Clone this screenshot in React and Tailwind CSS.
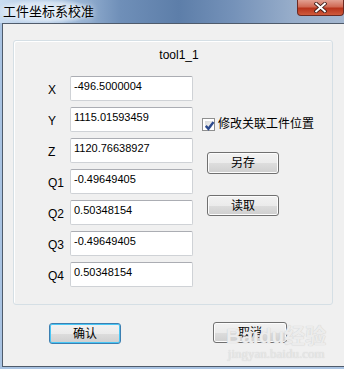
import React from "react";

const rows = [
  { label: "X", value: "-496.5000004" },
  { label: "Y", value: "1115.01593459" },
  { label: "Z", value: "1120.76638927" },
  { label: "Q1", value: "-0.49649405" },
  { label: "Q2", value: "0.50348154" },
  { label: "Q3", value: "-0.49649405" },
  { label: "Q4", value: "0.50348154" },
];

function WinButton({ children, focused, className = "" }) {
  return (
    <div
      className={`flex items-center justify-center rounded-[3px] border text-[12px] text-black ${
        focused
          ? "border-[#3c7fb1] shadow-[inset_0_0_0_1px_#48c6f5]"
          : "border-[#707070] shadow-[inset_0_0_0_1px_#fcfcfc]"
      } bg-[linear-gradient(#f2f2f2_0%,#ebebeb_50%,#dddddd_51%,#cfcfcf_100%)] ${className}`}
    >
      {children}
    </div>
  );
}

function CheckBox() {
  return (
    <div className="w-[13px] h-[13px] border border-[#8e8f8f] bg-white p-[2px]">
      <div className="w-full h-full bg-[linear-gradient(135deg,#d9dadb,#f6f6f6)] relative">
        <svg viewBox="0 0 9 9" className="absolute -left-[1px] -top-[1px] w-[11px] h-[11px]">
          <path d="M1.5 4.8 L3.6 7.2 L7.8 1.6" fill="none" stroke="#2c4a8e" strokeWidth="1.9" />
        </svg>
      </div>
    </div>
  );
}

export default function App() {
  return (
    <div
      className="w-[344px] h-[369px] overflow-hidden bg-[#a9c3e2] relative"
      style={{ fontFamily: '"Liberation Sans", "Noto Sans CJK SC", sans-serif' }}
    >
      {/* Title bar */}
      <div className="h-[23px] relative bg-[linear-gradient(90deg,#c9dcf1_0%,#a9c2df_18%,#6f8fb8_35%,#5d7ea9_52%,#7592b9_68%,#97adca_85%,#a4b7d0_100%)]">
        <div className="absolute left-0 top-0 w-[90px] h-[23px] bg-[radial-gradient(ellipse_at_center,#eef5fdcc_0%,#e4eef9aa_55%,transparent_80%)]" />
        <span className="absolute left-[3px] top-[3px] text-[13px] leading-[17px] text-black [text-shadow:0_0_6px_#ffffff]">
          工件坐标系校准
        </span>
        <div className="absolute right-0 top-0 w-[47px] h-[16px] rounded-b-[4px] border border-t-0 border-[#6b2a23] bg-[linear-gradient(#e2a092_0%,#d06a55_45%,#b8341c_55%,#cf5a3c_100%)] flex items-center justify-center">
          <svg viewBox="0 0 12 10" className="w-[13px] h-[11px]">
            <path d="M2 1.5 L10 8.5 M10 1.5 L2 8.5" stroke="#3b1a16" strokeWidth="3.4" strokeLinecap="square" />
            <path d="M2 1.5 L10 8.5 M10 1.5 L2 8.5" stroke="#ffffff" strokeWidth="1.8" strokeLinecap="square" />
          </svg>
        </div>
      </div>

      {/* Client area */}
      <div className="ml-[2px] h-[344px] border-l border-t border-b border-[#4f5b6b] bg-[#f0f0f0] flex flex-col">
        {/* Group box */}
        <div className="ml-[10px] mt-[16px] w-[320px] h-[265px] border border-[#d5dfe5] rounded-[3px] shadow-[inset_1px_1px_0_#ffffff]">
          <div className="text-center text-[12px] leading-[14px] text-black mt-[7px] pl-[12px]">tool1_1</div>
          <div className="flex mt-[14px]">
            <div className="flex flex-col gap-[6px] pl-[34px]">
              {rows.map((r) => (
                <div key={r.label} className="flex">
                  <div className="w-[22px] pt-[7px] text-[12px] leading-[14px] text-black">{r.label}</div>
                  <div className="w-[123px] h-[25px] bg-white border border-[#cfd2d6] border-t-[#abadb3] rounded-[2px] pl-[3px] pt-[2px] text-[11px] leading-[14px] text-black">
                    {r.value}
                  </div>
                </div>
              ))}
            </div>
            <div className="flex flex-col pl-[9px]">
              <div className="flex items-center mt-[41px] gap-[3px]">
                <CheckBox />
                <span className="text-[12px] leading-[15px] text-black">修改关联工件位置</span>
              </div>
              <WinButton className="ml-[5px] mt-[20px] w-[72px] h-[22px]">另存</WinButton>
              <WinButton className="ml-[5px] mt-[21px] w-[72px] h-[21px]">读取</WinButton>
            </div>
          </div>
        </div>

        {/* Bottom buttons */}
        <div className="flex mt-[17px] pl-[46px]">
          <WinButton focused className="w-[72px] h-[21px] mt-[1px]">确认</WinButton>
          <WinButton className="ml-[92px] w-[74px] h-[21px]">取消</WinButton>
        </div>
      </div>

      {/* Watermark */}
      <div className="absolute left-[226px] top-[325px] flex flex-col items-center pointer-events-none">
        <span className="text-[21px] leading-[22px] font-bold text-[#ececec] [text-shadow:0_0_1px_#c4c4c4]">Baidu经验</span>
        <span className="text-[13px] leading-[14px] text-[#e8e8e8] [text-shadow:0_0_1px_#c8c8c8]" style={{ fontFamily: '"Liberation Serif", serif' }}>
          jingyan.baidu.com
        </span>
      </div>
    </div>
  );
}
